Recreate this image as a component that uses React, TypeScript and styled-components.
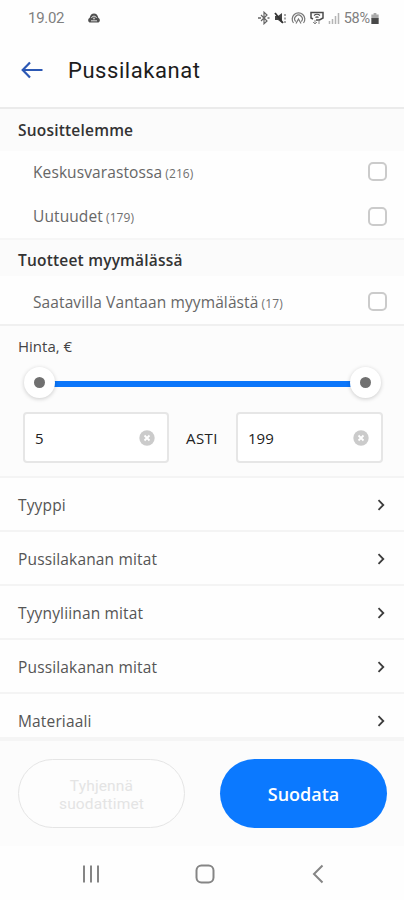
import React from 'react';
import styled, { createGlobalStyle } from 'styled-components';

const GlobalStyle = createGlobalStyle`
  * { box-sizing: border-box; }
  body { margin: 0; background: #fff; }
  button { margin: 0; padding: 0; border: 0; background: none; }
`;

const Screen = styled.div`
  width: 404px;
  height: 900px;
  display: flex;
  flex-direction: column;
  overflow: hidden;
  background: #fefefe;
  color: #555;
  font-family: 'Open Sans', 'Noto Sans', sans-serif;
  font-size: 15.5px;
`;

const StatusBar = styled.div`
  height: 36px;
  flex: none;
  display: flex;
  align-items: center;
  padding: 0 25px 0 28px;
  font-family: Roboto, sans-serif;
  font-size: 15px;
  color: #808080;
`;

const Clock = styled.span`
  width: 59px;
  letter-spacing: -0.3px;
`;

const StatusIcons = styled.div`
  margin-left: auto;
  display: flex;
  align-items: center;
  gap: 4px;
`;

const Battery = styled.span`
  font-size: 14.5px;
  letter-spacing: -0.2px;
  display: flex;
  align-items: center;
  gap: 1px;
`;

const Header = styled.header`
  height: 73px;
  flex: none;
  display: flex;
  align-items: center;
  padding: 0 21px 4px;
  gap: 25px;
  border-bottom: 2px solid #ebebeb;
`;

const Title = styled.h1`
  margin: 0;
  padding-top: 2px;
  font: 400 22px/30px Roboto, sans-serif;
  letter-spacing: 0.55px;
  color: #1c1c1c;
`;

const SectionTitle = styled.h2<{ $height: number; $ruled?: boolean }>`
  margin: 0;
  height: ${(p) => p.$height}px;
  flex: none;
  display: flex;
  align-items: center;
  padding: ${(p) => (p.$ruled ? '3px' : '0')} 0 ${(p) => (p.$ruled ? '0' : '1px')} 18px;
  background: #fbfbfb;
  border-top: ${(p) => (p.$ruled ? '2px solid #f6f6f6' : '0')};
  font-size: 15.5px;
  font-weight: 600;
  letter-spacing: 0.2px;
  color: #333;
`;

const Options = styled.div<{ $height: number }>`
  height: ${(p) => p.$height}px;
  flex: none;
`;

const Option = styled.label<{ $height: number }>`
  height: ${(p) => p.$height}px;
  display: flex;
  align-items: center;
  justify-content: space-between;
  padding: 0 17px 3px 33px;
  letter-spacing: 0.1px;
  color: #666;
`;

const Count = styled.small`
  margin-left: -1px;
  font-size: 12px;
  color: #707070;
`;

const Box = styled.span`
  width: 19px;
  height: 19px;
  border: 2px solid #cbcbcb;
  border-radius: 5px;
  background: #fff;
`;

const Price = styled.section`
  height: 154px;
  flex: none;
  border-top: 2px solid #f0f0f0;
  border-bottom: 2px solid #f4f4f4;
  background: #fcfcfc;
  padding: 10px 21px 0 23px;
`;

const PriceLabel = styled.div`
  height: 20px;
  line-height: 20px;
  margin-left: -5px;
  font-size: 15px;
  color: #444;
`;

const Slider = styled.div`
  height: 34px;
  margin-top: 9px;
  padding: 0 2px 0 1px;
  display: flex;
  align-items: center;
`;

const Track = styled.div`
  flex: 1;
  height: 6px;
  margin: 4px -1px 0;
  background: #0b76fa;
`;

const Thumb = styled.div`
  width: 31px;
  height: 31px;
  border-radius: 50%;
  background: #fff;
  box-shadow: 0 1px 4px rgba(0, 0, 0, 0.2);
  display: flex;
  align-items: center;
  justify-content: center;
  z-index: 1;
  &::after {
    content: '';
    width: 11px;
    height: 11px;
    border-radius: 50%;
    background: #707070;
  }
`;

const Range = styled.div`
  display: grid;
  grid-template-columns: 146px 1fr 147px;
  align-items: center;
  margin-top: 13px;
  text-align: center;
  font-size: 15px;
  color: #222;
  font-weight: 500;
`;

const Until = styled.span`
  padding-right: 1px;
  letter-spacing: 0.4px;
`;

const Field = styled.div`
  height: 51px;
  display: flex;
  align-items: center;
  justify-content: space-between;
  padding: 0 12px 0 10px;
  border: 2px solid #e6e6e6;
  border-radius: 4px;
  background: #fff;
`;

const LinkRow = styled.div`
  height: 54px;
  flex: none;
  display: flex;
  align-items: center;
  justify-content: space-between;
  padding: 1px 18px 0 18px;
  border-bottom: 2px solid #f4f4f4;
  letter-spacing: 0.15px;
`;

const LinkList = styled.div`
  height: 259px;
  flex: none;
  overflow: hidden;
`;

const Footer = styled.footer`
  height: 109px;
  flex: none;
  display: flex;
  justify-content: space-between;
  padding: 18px 17px 0 18px;
  border-top: 4px solid #f5f5f5;
  background: #fcfcfc;
`;

const Button = styled.button<{ $primary?: boolean }>`
  width: 167px;
  height: 69px;
  padding-top: ${(p) => (p.$primary ? '0' : '3px')};
  border-radius: 35px;
  border: ${(p) => (p.$primary ? '0' : '1px solid #e5e5e5')};
  background: ${(p) => (p.$primary ? '#0b79ff' : '#fdfdfd')};
  color: ${(p) => (p.$primary ? '#fff' : '#e4e4e4')};
  font: ${(p) => (p.$primary ? "600 18px 'Open Sans', sans-serif" : '400 15.5px/18px Roboto, sans-serif')};
  letter-spacing: ${(p) => (p.$primary ? '0' : '0.15px')};
`;

const NavBar = styled.nav`
  flex: 1;
  display: flex;
  justify-content: space-between;
  align-items: center;
  padding: 1px 73px 0 78px;
`;

const Clear = () => (
  <svg width="16" height="16" viewBox="0 0 16 16">
    <circle cx="8" cy="8" r="7.7" fill="#cbcbcb" />
    <path d="M5.5 5.5l5 5m0-5l-5 5" stroke="#fff" strokeWidth="1.8" />
  </svg>
);

const Chevron = () => (
  <svg width="10" height="14" viewBox="0 0 10 14" fill="none">
    <path d="M2.5 2.2L7.3 7l-4.8 4.8" stroke="#3c3c3c" strokeWidth="1.8" />
  </svg>
);

const CloudIcon = () => (
  <svg width="14" height="10" viewBox="0 0 14 10">
    <path d="M2.5 9.5a2.6 2.6 0 01.2-4.7C3.2 2 4.8.5 7 .5s3.800 1.500 4.300 4.300a2.600 2.600 0 01.2 4.700z" fill="#505050" />
    <path d="M4.500 5a2.600 2.600 0 015 0M4 7.800h6" stroke="#ddd" fill="none" />
    <circle cx="7" cy="5.500" r="1.100" fill="#bbb" />
  </svg>
);

const BluetoothIcon = () => (
  <svg width="12" height="14" viewBox="0 0 12 14" fill="none" stroke="#666" strokeWidth="1.200">
    <path d="M3 4l6 6-3 2.800V1.200L9 4l-6 6" />
    <path d="M0 7h3M9.500 7h2" strokeWidth="1.700" />
  </svg>
);

const MuteIcon = () => (
  <svg width="13" height="14" viewBox="0 0 13 14">
    <path d="M1 5h3l4-3v10L4 9H1z" fill="#444" />
    <path d="M1 2l8 10" stroke="#333" strokeWidth="1.800" />
    <path d="M11 3v2m0 1.500v2M11 10v2" stroke="#777" strokeWidth="1.300" />
  </svg>
);

const HotspotIcon = () => (
  <svg width="15" height="14" viewBox="0 0 15 14" fill="none" stroke="#777" strokeWidth="1.200">
    <path d="M2.500 12A6.300 6.300 0 1112.500 12M4.700 10.500a3.800 3.800 0 115.600 0" />
    <path d="M5 12.500l2.500-4.500 2.500 4.500" />
  </svg>
);

const CallingIcon = () => (
  <svg width="14" height="14" viewBox="0 0 14 14" fill="none" stroke="#4c4c4c" strokeWidth="1.500">
    <path d="M3 8L1 7V1.500h12V7L9.500 9H6" />
    <path d="M4 4.500q3-2.500 6 0M5.500 6.500q1.500-1.300 3 0" strokeWidth="1.200" />
    <path d="M5 9v4m-2-2l2 2 2-2m2 2V9" stroke="#888" strokeWidth="1" />
  </svg>
);

const SignalIcon = () => (
  <svg width="12" height="12" viewBox="0 0 12 12" stroke="#b4b4b4" strokeWidth="1.500">
    <path d="M1.500 12V9M4.500 12V7M7.500 12V4M10.500 12V1" />
  </svg>
);

const BatteryIcon = () => (
  <svg width="8" height="11" viewBox="0 0 8 12">
    <path d="M2.500 0h3v1.500H8V6H0V1.500h2.500z" fill="#aaa" />
    <path d="M0 5.500h8V12H0z" fill="#484848" />
  </svg>
);

const BackArrow = () => (
  <svg width="22" height="18" viewBox="0 0 22 18" fill="none" stroke="#2c58b4" strokeWidth="2.200">
    <path d="M9 1.500L1.700 9 9 16.500M1.700 9H21.500" />
  </svg>
);

function CheckOption({ name, count, height }: { name: string; count: number; height: number }) {
  return (
    <Option $height={height}>
      <span>
        {name} <Count>({count})</Count>
      </span>
      <Box />
    </Option>
  );
}

const filters = ['Tyyppi', 'Pussilakanan mitat', 'Tyynyliinan mitat', 'Pussilakanan mitat', 'Materiaali'];

export default function App() {
  return (
    <>
      <GlobalStyle />
      <Screen>
        <StatusBar>
          <Clock>19.02</Clock>
          <CloudIcon />
          <StatusIcons>
            <BluetoothIcon />
            <MuteIcon />
            <HotspotIcon />
            <CallingIcon />
            <SignalIcon />
            <Battery>
              58%
              <BatteryIcon />
            </Battery>
          </StatusIcons>
        </StatusBar>
        <Header>
          <BackArrow />
          <Title>Pussilakanat</Title>
        </Header>
        <SectionTitle $height={42}>Suosittelemme</SectionTitle>
        <Options $height={87}>
          <CheckOption name="Keskusvarastossa" count={216} height={44} />
          <CheckOption name="Uutuudet" count={179} height={45} />
        </Options>
        <SectionTitle $height={38} $ruled>
          Tuotteet myymälässä
        </SectionTitle>
        <Options $height={48}>
          <CheckOption name="Saatavilla Vantaan myymälästä" count={17} height={54} />
        </Options>
        <Price>
          <PriceLabel>Hinta, €</PriceLabel>
          <Slider>
            <Thumb />
            <Track />
            <Thumb />
          </Slider>
          <Range>
            <Field>
              5<Clear />
            </Field>
            <Until>ASTI</Until>
            <Field>
              199
              <Clear />
            </Field>
          </Range>
        </Price>
        <LinkList>
          {filters.map((name, i) => (
            <LinkRow key={i}>
              {name}
              <Chevron />
            </LinkRow>
          ))}
        </LinkList>
        <Footer>
          <Button>
            Tyhjennä
            <br />
            suodattimet
          </Button>
          <Button $primary>Suodata</Button>
        </Footer>
        <NavBar>
          <svg width="26" height="20" viewBox="0 0 26 20" stroke="#858585" strokeWidth="2">
            <path d="M6 1.500v17M13 1.500v17M20 1.500v17" />
          </svg>
          <svg width="20" height="20" viewBox="0 0 20 20" fill="none" stroke="#858585" strokeWidth="2">
            <rect x="1.500" y="1.500" width="17" height="17" rx="5" />
          </svg>
          <svg width="26" height="20" viewBox="0 0 26 20" fill="none" stroke="#858585" strokeWidth="2">
            <path d="M17.500 1.500L9 10l8.500 8.500" />
          </svg>
        </NavBar>
      </Screen>
    </>
  );
}
